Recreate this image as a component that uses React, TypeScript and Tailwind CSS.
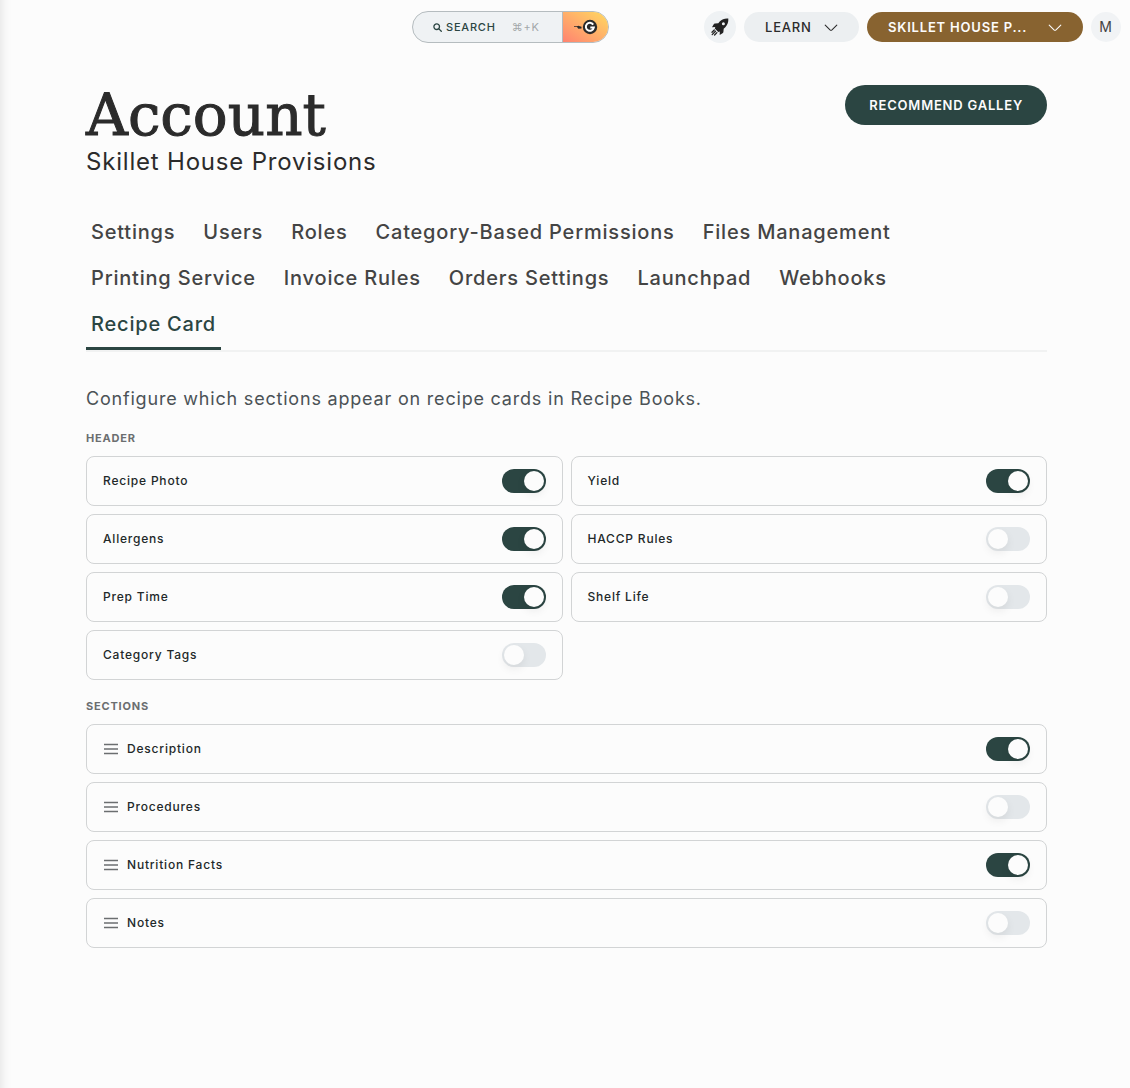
import { useState } from 'react'
import clsx from 'clsx'

interface CardOption {
  id: string
  label: string
  enabled: boolean
}

const TABS = [
  'Settings',
  'Users',
  'Roles',
  'Category-Based Permissions',
  'Files Management',
  'Printing Service',
  'Invoice Rules',
  'Orders Settings',
  'Launchpad',
  'Webhooks',
  'Recipe Card',
]

const HEADER_OPTIONS: CardOption[] = [
  { id: 'photo', label: 'Recipe Photo', enabled: true },
  { id: 'yield', label: 'Yield', enabled: true },
  { id: 'allergens', label: 'Allergens', enabled: true },
  { id: 'haccp', label: 'HACCP Rules', enabled: false },
  { id: 'prep-time', label: 'Prep Time', enabled: true },
  { id: 'shelf-life', label: 'Shelf Life', enabled: false },
  { id: 'category-tags', label: 'Category Tags', enabled: false },
]

const SECTION_OPTIONS: CardOption[] = [
  { id: 'description', label: 'Description', enabled: true },
  { id: 'procedures', label: 'Procedures', enabled: false },
  { id: 'nutrition', label: 'Nutrition Facts', enabled: true },
  { id: 'notes', label: 'Notes', enabled: false },
]

function ChevronIcon() {
  return (
    <svg className="h-2 w-3.5" viewBox="0 0 14 8" fill="none" stroke="currentColor" strokeWidth="1.1" strokeLinecap="round" strokeLinejoin="round">
      <path d="M1.2 1.2 6 5.8q1 .9 2 0l4.8-4.6" />
    </svg>
  )
}

function SearchIcon() {
  return (
    <svg className="h-[9px] w-[9px]" viewBox="0 0 9 9" fill="none" stroke="currentColor" strokeWidth="1.3" strokeLinecap="round">
      <circle cx="3.7" cy="3.7" r="2.8" />
      <path d="m5.9 5.9 2.4 2.4" />
    </svg>
  )
}

function RocketIcon() {
  return (
    <svg className="h-[18px] w-[18px]" viewBox="0 0 18 18" fill="none">
      <path
        fill="currentColor"
        fillRule="evenodd"
        d="M17.3.6c-3.4-.3-6.3.6-8.6 3L7.3 5.2 4 5.5C3.3 5.6 2.9 6 2.6 6.5L1 9.3l3.3-.2-.5 1.5 3.5 3.5 1.5-.5-.1 3.4 2.8-1.7c.5-.3.8-.8.9-1.4l.3-3.2 1.6-1.4c2.3-2.3 3.3-5.3 3-8.7ZM12.4 7.3a1.5 1.5 0 1 1 0-3 1.500 1.500 0 0 1 0 3Z"
      />
      <path stroke="currentColor" strokeWidth="1.3" strokeLinecap="round" d="M3.3 12 1 14.3M4.5 13.3l-3.3 3.3M5.9 14.6l-2.3 2.4" />
    </svg>
  )
}

function GalleyBadge() {
  return (
    <svg className="h-4 w-6" viewBox="0 0 24 16">
      <path fill="#2b2b2b" d="M0 7.3h3l1.2-.6 3.3 1v1.8l-3.2.3L3 8.1H0Z" />
      <circle cx="16" cy="8" r="7.2" fill="#2b2b2b" />
      <path fill="none" stroke="#fff" strokeWidth="2" d="M19.2 5.6a4 4 0 1 0 .6 3H16.3" />
    </svg>
  )
}

function DragHandle() {
  return (
    <svg className="h-3.5 w-3.5 text-[#6b6e70]" viewBox="0 0 14 14" stroke="currentColor" strokeWidth="1.7">
      <path d="M0 2.5h14M0 7h14M0 11.5h14" />
    </svg>
  )
}

interface OptionRowProps {
  option: CardOption
  draggable?: boolean
  onToggle: () => void
}

function OptionRow({ option, draggable, onToggle }: OptionRowProps) {
  return (
    <div className="flex h-[50px] items-center gap-2 rounded-lg border border-[#d2d4d5] px-4">
      {draggable && (
        <span className="flex w-4 cursor-grab justify-center">
          <DragHandle />
        </span>
      )}
      <label htmlFor={option.id} className="flex-1 text-xs font-medium text-[#222829]">
        {option.label}
      </label>
      <input
        id={option.id}
        type="checkbox"
        role="switch"
        checked={option.enabled}
        onChange={onToggle}
        className="h-6 w-11 cursor-pointer appearance-none rounded-full bg-[#e3e7ea] p-0.5 before:block before:size-5 before:rounded-full before:bg-[#fcfcfc] before:shadow-[0_4px_10px_rgba(0,0,0,0.07)] checked:bg-[#2b4542] checked:before:ml-5"
      />
    </div>
  )
}

function TopBar() {
  return (
    <header className="flex items-center px-[9px] pt-[11px]">
      <div className="ml-auto flex h-8 overflow-hidden rounded-full border border-[#b5bcbf] bg-[#eff2f4]">
        <button className="flex w-[149px] items-center pl-5 text-[11px] font-medium text-[#2b4542]">
          <SearchIcon />
          <span className="ml-1">SEARCH</span>
          <span className="ml-4 font-normal text-[#a3a8aa]">⌘+K</span>
        </button>
        <button aria-label="Galley assistant" className="flex w-[46px] items-center justify-center border-l border-[#b5bcbf] bg-linear-to-tr from-[#ff826f] to-[#ffd95f]">
          <GalleyBadge />
        </button>
      </div>
      <div className="ml-[95px] flex items-center gap-2">
        <button aria-label="Launchpad" className="flex size-8 items-center justify-center rounded-full bg-[#eff2f4] text-[#222]">
          <RocketIcon />
        </button>
        <button className="flex h-[30px] w-[115px] items-center justify-between rounded-full bg-[#eceff1] px-[21px] pt-px text-[13px] font-medium text-[#2b2b2b]">
          LEARN
          <ChevronIcon />
        </button>
        <button className="flex h-[30px] w-[216px] items-center justify-between rounded-full bg-[#886330] px-[21px] pt-px text-[13px] font-semibold text-[#fcfcfc]">
          SKILLET HOUSE P...
          <ChevronIcon />
        </button>
        <button className="size-[30px] rounded-full bg-[#f1f3f5] text-sm text-[#444]">M</button>
      </div>
    </header>
  )
}

export default function App() {
  const [activeTab, setActiveTab] = useState('Recipe Card')
  const [headerOptions, setHeaderOptions] = useState(HEADER_OPTIONS)
  const [sectionOptions, setSectionOptions] = useState(SECTION_OPTIONS)

  const toggle = (options: CardOption[], id: string) =>
    options.map((o) => (o.id === id ? { ...o, enabled: !o.enabled } : o))

  return (
    <div className="min-h-screen bg-[#fcfcfc] font-['Inter',sans-serif] tracking-wider shadow-[inset_12px_0_12px_-12px_rgba(0,0,0,0.13)]">
      <TopBar />
      <main className="pr-[83px] pb-10 pl-[86px]">
        <div className="flex items-start justify-between pt-[42px]">
          <div>
            <h1 className="font-['DejaVu_Serif',serif] text-[58px] leading-[60px] tracking-normal text-[#2b2b2b] [-webkit-text-stroke:1px]">
              Account
            </h1>
            <p className="text-2xl leading-[34px] text-[#2b2b2b]">Skillet House Provisions</p>
          </div>
          <button className="h-10 rounded-full bg-[#2b4542] px-6 pt-px text-[13px] font-semibold text-[#fcfcfc]">
            RECOMMEND GALLEY
          </button>
        </div>

        <nav className="mt-[33px] flex flex-wrap gap-x-[18px] border-b-2 border-[#f1f2f2] pr-5">
          {TABS.map((tab) => (
            <button
              key={tab}
              onClick={() => setActiveTab(tab)}
              className={clsx(
                'h-[46px] border-b-3 px-[5px] pb-1 text-xl font-medium',
                tab === activeTab ? 'border-[#2b4542] text-[#2b4542]' : 'border-transparent text-[#444]',
              )}
            >
              {tab}
            </button>
          ))}
        </nav>

        <p className="mt-[33px] text-lg text-[#4b5256]">Configure which sections appear on recipe cards in Recipe Books.</p>

        <h2 className="mt-[17px] mb-2.5 text-[11px] leading-4 font-bold text-[#6b6e70]">HEADER</h2>
        <div className="grid grid-cols-2 gap-2">
          {headerOptions.map((option) => (
            <OptionRow
              key={option.id}
              option={option}
              onToggle={() => setHeaderOptions(toggle(headerOptions, option.id))}
            />
          ))}
        </div>

        <h2 className="mt-[18px] mb-2.5 text-[11px] leading-4 font-bold text-[#6b6e70]">SECTIONS</h2>
        <div className="grid gap-2">
          {sectionOptions.map((option) => (
            <OptionRow
              key={option.id}
              option={option}
              draggable
              onToggle={() => setSectionOptions(toggle(sectionOptions, option.id))}
            />
          ))}
        </div>
      </main>
    </div>
  )
}
